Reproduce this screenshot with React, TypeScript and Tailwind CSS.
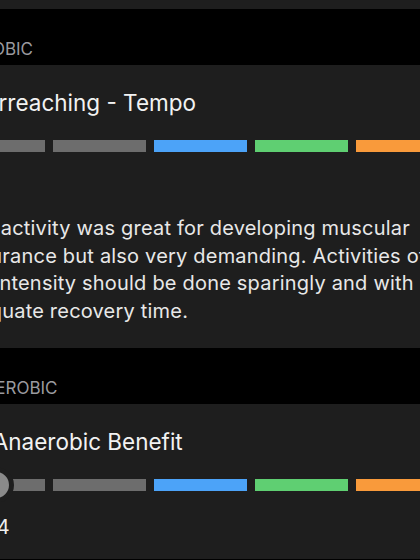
import React from "react";

const font = { fontFamily: "Inter, 'Noto Sans', sans-serif" };

function Bars({ marker, markerLeft, label, labelLeft }: { marker: boolean; markerLeft: number; label: string; labelLeft: number }) {
  return (
    <div className="relative">
      <div className="flex gap-[8px] ml-[-4px] h-[12px]">
        <div className="w-[93px] h-[12px] bg-[#6d6d6d] shrink-0" />
        <div className="w-[93px] h-[12px] bg-[#6d6d6d] shrink-0" />
        <div className="w-[93px] h-[12px] bg-[#4ca3f8] shrink-0" />
        <div className="w-[93px] h-[12px] bg-[#5fcf72] shrink-0" />
        <div className="w-[93px] h-[12px] bg-[#f99a3b] shrink-0" />
      </div>
      {marker && (
        <div
          className="absolute top-[-12px] w-[36px] h-[36px] rounded-full bg-[#8a8a8a] border-[5px] border-[#1e1e1e]"
          style={{ left: markerLeft }}
        />
      )}
      <div className="relative h-[24px] mt-[24px]">
        <span
          className="absolute top-0 text-[20px] leading-[24px] text-[#f0f0f0] whitespace-nowrap"
          style={{ left: labelLeft }}
        >
          {label}
        </span>
      </div>
    </div>
  );
}

function Header({ text }: { text: string }) {
  return (
    <div className="h-[56px] bg-black pt-[30px] pl-[19px]">
      <div className="text-[17px] leading-[20px] text-[#9a9a9f] uppercase whitespace-nowrap">{text}</div>
    </div>
  );
}

export default function App() {
  return (
    <div className="w-[420px] h-[560px] overflow-hidden bg-black" style={font}>
      <div className="ml-[-60px] w-[540px]">
        <div className="h-[9px] bg-[#1e1e1e]" />
        <Header text="Aerobic" />
        <div className="h-[283px] bg-[#1e1e1e] px-[16px] pt-[24px]">
          <div className="text-[22.5px] leading-[28px] text-[#f2f2f2] whitespace-nowrap">Overreaching - Tempo</div>
          <div className="mt-[23px]">
            <Bars marker={true} markerLeft={474} label="5.0" labelLeft={476} />
          </div>
          <div className="mt-[15px] ml-[-2px] text-[20px] tracking-[0.2px] leading-[27.5px] text-[#e8e8e8]">
            <div className="whitespace-nowrap">This activity was great for developing muscular</div>
            <div className="whitespace-nowrap">endurance but also very demanding. Activities of</div>
            <div className="whitespace-nowrap">this intensity should be done sparingly and with</div>
            <div className="whitespace-nowrap">adequate recovery time.</div>
          </div>
        </div>
        <Header text="Anaerobic" />
        <div className="h-[155px] bg-[#1e1e1e] px-[16px] pt-[24px]">
          <div className="text-[22.5px] leading-[28px] text-[#f2f2f2] whitespace-nowrap">No Anaerobic Benefit</div>
          <div className="mt-[23px]">
            <Bars marker={true} markerLeft={22} label="0.4" labelLeft={23} />
          </div>
        </div>
      </div>
    </div>
  );
}
